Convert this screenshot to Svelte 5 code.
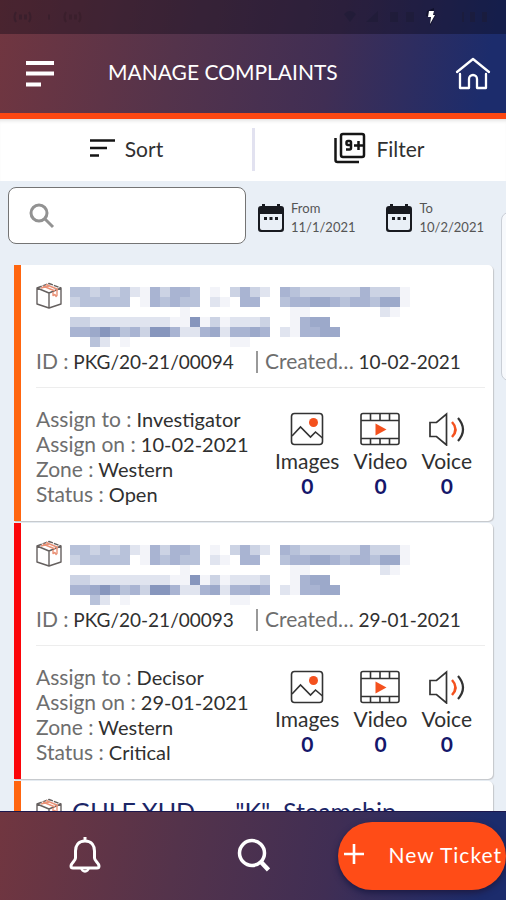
<script>
  const tickets = [
    { id: 'PKG/20-21/00094', created: '10-02-2021', assignee: 'Investigator', assigned: '10-02-2021', zone: 'Western', status: 'Open', tone: 'orange' },
    { id: 'PKG/20-21/00093', created: '29-01-2021', assignee: 'Decisor', assigned: '29-01-2021', zone: 'Western', status: 'Critical', tone: 'red' },
    { tone: 'orange', name: 'GULF XUD  –  "K"  Steamship' }
  ];

  // Each digit is one mosaic cell, from 0 (clear) to 7 (darkest)
  const mosaic = [
    '4434342153554010353205433333353331',
    '3444440154544021055004556654554661',
    '0000000000010000000000110000000210',
    '3322222222117131222300156600000000',
    '5567645377522562556502155660000000',
    '0042010000000000110000000000000000'
  ];
  const shades = ['none', '#f3f4f9', '#e0e4ef', '#ccd3e4', '#b8c2da', '#a9b4d2', '#9ca9ca', '#8796bd'];

  let query = $state('');
</script>

{#snippet calendar()}
  <svg width="26" height="30" viewBox="0 0 26 30" aria-hidden="true">
    <path d="M4 1h3v4H4zM19 1h3v4h-3z" fill="#181a20" />
    <path d="M3 3h20a3 3 0 0 1 3 3v20a3 3 0 0 1-3 3H3a3 3 0 0 1-3-3V6a3 3 0 0 1 3-3zM2 11v14a2 2 0 0 0 2 2h18a2 2 0 0 0 2-2V11z" fill="#181a20" fill-rule="evenodd" />
    <path d="M6 14h3v3H6zM11.500 14h3v3h-3zM17 14h3v3h-3z" fill="#181a20" />
  </svg>
{/snippet}

<div class="app">
  <header>
    <div class="status">
      <svg width="72" height="16" viewBox="0 0 72 16" aria-hidden="true" fill="none" stroke="#3a1f2c" stroke-width="2">
        <path d="M4 3q-3 5 0 10M17 3q3 5 0 10M54 3q-3 5 0 10M67 3q3 5 0 10" />
        <path d="M7 8h3M12 8h3M36 8h2M57 8h3M62 8h3" stroke-width="5" />
      </svg>
      <svg width="154" height="20" viewBox="0 0 154 20" aria-hidden="true">
        <path d="M4 7q6-6 12 0l-6 8zM26 15 38 4v11zM50 5h8v10h-8zM66 5h8v10h-8zM122 5h2v10h-2zM130 5h5v10h-5zM142 5h5v10h-5z" fill="#1b1934" opacity=".5" />
        <path d="M87 4l7-3v6l2 1-6 11V9h-4z" fill="#11112c" />
        <path d="M89 4h5l-1 4h2l-5 9 1-7h-3z" fill="#fff" />
      </svg>
    </div>
    <div class="title-bar">
      <button class="icon" aria-label="Menu">
        <svg width="28" height="26" viewBox="0 0 28 26"><path d="M0 2h28M0 12.500h28M0 23.500h15" stroke="#fff" stroke-width="4" /></svg>
      </button>
      <h1>MANAGE COMPLAINTS</h1>
      <a class="icon" href="#home" aria-label="Home">
        <svg width="36" height="34" viewBox="0 0 36 34" fill="none" stroke="#fff" stroke-width="2.300" stroke-linejoin="round" stroke-linecap="round"><path d="M2 15 18 2l16 13M5 17v14h9V22a4 4 0 0 1 8 0v9h9V17" /></svg>
      </a>
    </div>
  </header>

  <div class="tools">
    <button>
      <svg width="25" height="18" viewBox="0 0 25 18"><path d="M0 1.500h25M0 9h17M0 16.500h9" stroke="#151515" stroke-width="2.600" /></svg>
      Sort
    </button>
    <button>
      <svg width="32" height="32" viewBox="0 0 32 32" fill="none" stroke="#151515" stroke-width="2.500">
        <rect x="7" y="2" width="23" height="23" rx="2" />
        <path d="M1.500 6v22q0 2 2 2H25" />
        <path d="M17 13h-3q-1.500 0-1.500-1.500v-1q0-1.500 1.500-1.500h1.500q1.500 0 1.500 1.500v5.500q0 1.500-1.500 1.500H12M20 13.500h10M24.500 9v9" />
      </svg>
      Filter
    </button>
  </div>

  <main>
    <div class="filters">
      <label class="search">
        <svg width="26" height="26" viewBox="0 0 26 26" fill="none" stroke="#929292" stroke-width="3"><circle cx="10" cy="10" r="8" /><path d="m16 16 8 8" /></svg>
        <input type="search" aria-label="Search complaints" bind:value={query} />
      </label>
      <div class="dates">
        <button class="date">{@render calendar()}<span>From<br />11/1/2021</span></button>
        <button class="date">{@render calendar()}<span>To<br />10/2/2021</span></button>
      </div>
    </div>

    <div class="list">
      {#each tickets as t}
        <article class={t.tone}>
          <div class="name">
            <svg width="26" height="28" viewBox="0 0 26 28" fill="none" stroke="#65605f" stroke-width="1.400" stroke-linejoin="round">
              <path d="M1 6 13 11v15L1 22zM25 6 13 11v15l12-4z" />
              <path d="M1 6 13 1.500 25 6" stroke-dasharray="5 1" />
              <path d="m7 4 12 5M10 2.500 22 7.500M17 10v3.500l2-1 1 2 1-1V7.500M5 6l8-2" stroke="#ea9277" />
            </svg>
            {#if t.name}
              <h2>{t.name}</h2>
            {:else}
              <svg class="mosaic" viewBox="0 0 340 60" role="img" aria-label="Hidden customer name" shape-rendering="crispEdges">
                {#each mosaic as row, y}
                  {#each row as level, x}
                    {#if level !== '0'}
                      <rect x={x * 10} y={y * 10} width="10" height="10" fill={shades[level]} />
                    {/if}
                  {/each}
                {/each}
              </svg>
            {/if}
          </div>
          {#if t.id}
            <div class="meta">
              <p><span>ID :</span> {t.id}</p>
              <p class="created"><span>Created…</span> {t.created}</p>
            </div>
            <div class="details">
              <div class="facts">
                <p><span>Assign to :</span> {t.assignee}</p>
                <p><span>Assign on :</span> {t.assigned}</p>
                <p><span>Zone :</span> {t.zone}</p>
                <p><span>Status :</span> {t.status}</p>
              </div>
              <div class="media">
                <div>
                  <svg width="34" height="34" viewBox="0 0 34 34" fill="none" stroke="#333" stroke-width="1.600"><rect x="1.500" y="1.500" width="31" height="31" rx="3" /><path d="m2 24 8.500-9 10 10 5-5 7 6" /><circle cx="23.500" cy="10.500" r="4.500" fill="#f4511e" stroke="none" /></svg>
                  Images<b>0</b>
                </div>
                <div>
                  <svg width="40" height="34" viewBox="0 0 40 34" fill="none" stroke="#333" stroke-width="1.600"><rect x="1" y="1.500" width="38" height="31" rx="2" /><path d="M1 8.500h38M1 26.500h38M10.500 2v6M20 2v6M29.500 2v6M10.500 27v5M20 27v5M29.500 27v5" /><path d="m15.500 11.500 11 6-11 6z" fill="#f4511e" stroke="none" /></svg>
                  Video<b>0</b>
                </div>
                <div>
                  <svg width="38" height="34" viewBox="0 0 38 34" fill="none" stroke="#333" stroke-width="1.700"><path d="M2 10.500h6.500L18.500 2v31l-10-8.500H2z" /><path d="M24 10q7 7.500 0 15" stroke="#f4511e" stroke-width="2.500" /><path d="M30 6q10 11.500 0 23" stroke-width="2.200" /></svg>
                  Voice<b>0</b>
                </div>
              </div>
            </div>
          {/if}
        </article>
      {/each}
    </div>
    <div class="drawer"></div>
  </main>

  <nav>
    <a href="#alerts" aria-label="Notifications">
      <svg width="32" height="36" viewBox="0 0 32 36" fill="none" stroke="#fff" stroke-width="3" stroke-linejoin="round"><path d="M16 0v4M16 4C9 4 6.500 9 6.500 14v7c0 3-4.500 5-4.500 8q0 2 2 2h24q2 0 2-2c0-3-4.500-5-4.500-8v-7C25.500 9 23 4 16 4z" /><path d="M12.500 31a3.500 3.500 0 0 0 7 0" stroke-width="2.500" /></svg>
    </a>
    <a href="#search" aria-label="Search">
      <svg width="33" height="34" viewBox="0 0 33 34" fill="none" stroke="#fff" stroke-width="3.500"><circle cx="15" cy="15" r="12.500" /><path d="m23.500 23.500 8 8.500" stroke-width="4.500" /></svg>
    </a>
    <button>
      <svg width="20" height="20" viewBox="0 0 20 20"><path d="M10 0v20M0 10h20" stroke="#fff" stroke-width="2.600" /></svg>
      New Ticket
    </button>
  </nav>
</div>

<style>
  :global(body) { margin: 0; }
  .app {
    height: 100vh;
    display: flex;
    flex-direction: column;
    overflow: hidden;
    background: #e9eff6;
    color: #303030;
    font: 20px/25px Lato, "Open Sans", sans-serif;
  }
  * { box-sizing: border-box; }
  svg { flex: none; display: block; }
  p, h1, h2 { margin: 0; font-size: inherit; font-weight: 400; }
  button { border: 0; background: none; padding: 0; color: inherit; font: inherit; cursor: pointer; }
  a { color: inherit; }
  header, nav { background: linear-gradient(100deg, #713640 0%, #54334b 35%, #402e54 65%, #1c2c6c 95%); }
  header { border-bottom: 6px solid #fc4712; flex: none; }
  .status {
    height: 34px;
    padding: 0 12px;
    display: flex;
    justify-content: space-between;
    align-items: center;
    background: rgba(10, 8, 20, .38);
  }
  .title-bar { height: 79px; display: flex; align-items: center; padding: 0 15px 0 26px; }
  .icon { display: block; }
  h1 { flex: 1; margin-left: 54px; padding-bottom: 4px; color: #fff; font-size: 21px; }
  .tools { display: flex; height: 62px; flex: none; background: #fff; box-shadow: inset 0 4px 4px -3px #d8d8d8; font-size: 21px; }
  .tools button { flex: 1; display: flex; align-items: center; justify-content: center; gap: 10px; padding-bottom: 4px; position: relative; }
  .tools button:first-child::after { content: ''; position: absolute; right: -2px; top: 9px; width: 3px; height: 43px; background: #e2e2f0; }
  main { flex: 1; min-height: 0; overflow: hidden; position: relative; }
  .filters { display: flex; align-items: center; gap: 12px; padding: 6px 22px 0 8px; }
  .search {
    flex: 0 1 238px;
    min-width: 0;
    height: 57px;
    padding-left: 20px;
    display: flex;
    align-items: center;
    gap: 12px;
    border: 1px solid #747474;
    border-radius: 8px;
    background: #fff;
  }
  input { flex: 1; min-width: 0; width: 100%; padding: 0; border: 0; outline: 0; background: none; font: inherit; }
  .dates { flex: 1 0 auto; display: flex; justify-content: space-between; gap: 12px; padding-top: 4px; }
  .list { padding: 21px 13px 0 14px; display: flex; flex-direction: column; gap: 2px; }
  article {
    min-height: 256px;
    padding: 17px 8px 0 15px;
    border-left: 7px solid #ff650f;
    border-radius: 0 5px 5px 0;
    background: #fff;
    box-shadow: 1px 1px 1px #c4c6ca;
  }
  article.red { border-color: #fb0509; }
  .name { display: flex; align-items: flex-start; gap: 8px; height: 67px; }
  .mosaic { flex: 0 1 340px; min-width: 0; height: 60px; margin-top: 5px; }
  h2 { flex: 1; padding-left: 2px; color: #1c2667; font-size: 25px; line-height: 26px; white-space: pre-wrap; }
  span { color: #6e6e6e; font-size: 21px; line-height: 20px; }
  .date { display: flex; align-items: center; gap: 7px; text-align: left; }
  .date span { color: #555; font-size: 13px; line-height: 19px; }
  .meta { display: flex; height: 39px; border-bottom: 1px solid #ededed; white-space: nowrap; font-size: 19px; }
  .meta p { flex: 0 0 220px; }
  .meta .created { flex: 1; height: 22px; line-height: 22px; margin-top: 2px; padding-left: 7px; border-left: 2px solid #999; }
  .details { display: flex; justify-content: space-between; padding: 19px 13px 0 0; }
  .media { display: flex; gap: 14px; padding-top: 5px; font-size: 21px; }
  .media div { display: flex; flex-direction: column; align-items: center; }
  .media svg { margin-bottom: 2px; }
  b { color: #15176b; font-weight: 700; }
  .drawer { position: absolute; top: 31px; right: -12px; width: 17px; height: 169px; border: 1px solid #c9ced6; border-radius: 8px; background: #f7f9fc; }
  nav { flex: none; height: 89px; display: flex; align-items: center; border-top: 1px solid #1c174c; }
  nav a { flex: 1; display: flex; justify-content: center; padding-bottom: 2px; }
  nav button {
    flex: 0 0 168px;
    height: 68px;
    display: flex;
    align-items: center;
    justify-content: space-between;
    padding: 0 4px 4px 6px;
    border-radius: 34px;
    background: #ff4c17;
    color: #fff;
    font-size: 21px;
    letter-spacing: 1px;
    white-space: nowrap;
    box-shadow: 0 3px 6px #1d1b44;
  }
</style>
